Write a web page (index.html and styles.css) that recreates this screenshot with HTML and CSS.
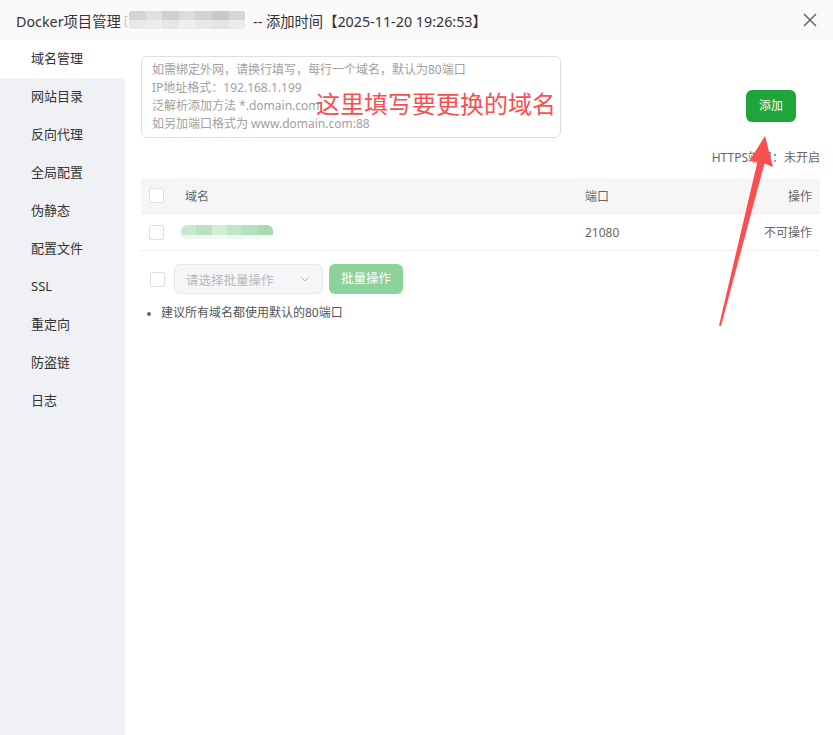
FILE: index.html
```html
<!DOCTYPE html>
<html lang="zh">
<head>
<meta charset="utf-8">
<link rel="stylesheet" href="styles.css">
</head>
<body>
<div class="dialog">
  <div class="header">
    <div class="title">
      <span>Docker项目管理</span>
      <span class="bracket">[</span>
      <span class="blur-title"><i></i><i></i><i></i><i></i><i></i><i></i><i></i></span>
      <span class="time">-- 添加时间【2025-11-20 19:26:53】</span>
    </div>
    <svg class="close" width="14" height="14" viewBox="0 0 14 14"><path d="M1 1L13 13M13 1L1 13" stroke="#666" stroke-width="1.5" fill="none"/></svg>
  </div>
  <div class="body">
    <div class="sidebar">
      <div class="nav-item active">域名管理</div>
      <div class="nav-item">网站目录</div>
      <div class="nav-item">反向代理</div>
      <div class="nav-item">全局配置</div>
      <div class="nav-item">伪静态</div>
      <div class="nav-item">配置文件</div>
      <div class="nav-item">SSL</div>
      <div class="nav-item">重定向</div>
      <div class="nav-item">防盗链</div>
      <div class="nav-item">日志</div>
    </div>
    <div class="main">
      <div class="top-row">
        <div class="textarea">
          <div>如需绑定外网，请换行填写，每行一个域名，默认为80端口</div>
          <div>IP地址格式：192.168.1.199</div>
          <div>泛解析添加方法 *.domain.com</div>
          <div>如另加端口格式为 www.domain.com:88</div>
        </div>
        <div class="btn-add">添加</div>
      </div>
      <div class="https">HTTPS端口：未开启</div>
      <div class="table">
        <div class="tr thead">
          <div class="c-check"><span class="checkbox"></span></div>
          <div class="c-domain">域名</div>
          <div class="c-port">端口</div>
          <div class="c-op">操作</div>
        </div>
        <div class="tr">
          <div class="c-check"><span class="checkbox"></span></div>
          <div class="c-domain"><span class="blur-domain"><i></i><i></i><i></i><i></i><i></i><i></i></span></div>
          <div class="c-port">21080</div>
          <div class="c-op">不可操作</div>
        </div>
      </div>
      <div class="batch">
        <span class="checkbox"></span>
        <div class="select"><span>请选择批量操作</span>
          <svg width="10" height="6" viewBox="0 0 10 6"><path d="M1 1L5 5L9 1" stroke="#bbb" stroke-width="1" fill="none"/></svg>
        </div>
        <div class="btn-batch">批量操作</div>
      </div>
      <ul class="tips">
        <li>建议所有域名都使用默认的80端口</li>
      </ul>
    </div>
  </div>
  <div class="annot">这里填写要更换的域名</div>
  <svg class="arrow" width="833" height="735" viewBox="0 0 833 735">
    <polygon points="765,136 773,167 764.5,163.5 721,326 719,325.5 757.5,161.5 749.5,161" fill="#fb4f4f"/>
  </svg>
</div>
</body>
</html>
```
FILE: styles.css
```css
* { box-sizing: border-box; }
html, body { margin: 0; padding: 0; }
body {
  font-family: "Noto Sans", "Noto Sans CJK SC", sans-serif;
  color: #333;
  background: #fff;
}
.dialog {
  position: relative;
  width: 833px;
  height: 735px;
  display: flex;
  flex-direction: column;
  overflow: hidden;
}
.header {
  height: 40px;
  flex: none;
  background: #fafafa;
  display: flex;
  align-items: center;
  justify-content: space-between;
  padding: 0 16px 0 16px;
}
.title {
  display: flex;
  align-items: center;
  font-size: 14.3px;
  color: #333;
  white-space: nowrap;
}
.bracket { color: #c8c8c8; margin-left: 3px; margin-right: 1px; font-size: 13px; }
.blur-title {
  display: flex;
  height: 18px;
  width: 116px;
  margin-right: 8px;
  border-radius: 3px;
  overflow: hidden;
}
.blur-title i {
  flex: 1;
  background: linear-gradient(#d4d4d8 0 50%, #e8e8ea 50% 100%);
}
.blur-title i:nth-child(2) { background: linear-gradient(#e0e0e3 0 50%, #ececee 50% 100%); }
.blur-title i:nth-child(3) { background: linear-gradient(#d0d0d4 0 50%, #e6e6e8 50% 100%); }
.blur-title i:nth-child(4) { background: linear-gradient(#dcdce0 0 50%, #eeeef0 50% 100%); }
.blur-title i:nth-child(5) { background: linear-gradient(#d2d2d6 0 50%, #e8e8ea 50% 100%); }
.blur-title i:nth-child(6) { background: linear-gradient(#c8c8cc 0 50%, #e4e4e6 50% 100%); }
.blur-title i:nth-child(7) { background: linear-gradient(#d6d6da 0 50%, #ebebed 50% 100%); }
.body {
  flex: 1;
  display: flex;
}
.sidebar {
  width: 125px;
  flex: none;
  background: #f0f1f5;
}
.nav-item {
  height: 38px;
  line-height: 36px;
  padding-left: 31px;
  font-size: 13px;
  color: #333;
}
.nav-item.active { background: #fff; }
.main {
  flex: 1;
  padding: 16px 13px 0 16px;
}
.top-row {
  display: flex;
  justify-content: space-between;
  align-items: flex-start;
}
.textarea {
  width: 420px;
  height: 82px;
  border: 1px solid #dcdfe6;
  border-radius: 6px;
  padding: 4px 10px;
  font-size: 12px;
  line-height: 18px;
  color: #a0a0a0;
  white-space: nowrap;
}
.btn-add {
  margin-top: 34px;
  margin-right: 24px;
  width: 50px;
  height: 32px;
  line-height: 32px;
  text-align: center;
  background: #20a53a;
  color: #fff;
  border-radius: 6px;
  font-size: 12px;
}
.https {
  margin-top: 12px;
  height: 16px;
  line-height: 16px;
  text-align: right;
  font-size: 12px;
  color: #666;
}
.table {
  margin-top: 12px;
  font-size: 12px;
  color: #666;
}
.tr {
  display: flex;
  align-items: center;
  height: 37px;
  border-bottom: 1px solid #ebeef5;
  padding: 0 8px;
}
.thead { height: 36px; background: #f6f6f6; }
.c-check { width: 36px; display: flex; }
.c-domain { width: 400px; display: flex; align-items: center; }
.c-port { flex: 1; }
.c-op { text-align: right; }
.checkbox {
  display: inline-block;
  width: 15px;
  height: 15px;
  border: 1px solid #dcdfe6;
  border-radius: 2px;
  background: #fff;
}
.blur-domain {
  display: flex;
  width: 92px;
  height: 14px;
  margin-left: -4px;
  border-radius: 6px;
  overflow: hidden;
}
.blur-domain i { flex: 1; background: linear-gradient(#c8e8cf 0 70%, #eaf6ec 70% 100%); }
.blur-domain i:nth-child(2) { background: linear-gradient(#b8e2c2 0 70%, #eef8f0 70% 100%); }
.blur-domain i:nth-child(3) { background: linear-gradient(#d2eed8 0 70%, #f2faf3 70% 100%); }
.blur-domain i:nth-child(4) { background: linear-gradient(#bfe6c8 0 70%, #eef8f0 70% 100%); }
.blur-domain i:nth-child(5) { background: linear-gradient(#b4e0be 0 70%, #f0f9f2 70% 100%); }
.blur-domain i:nth-child(6) { background: linear-gradient(#a8dab4 0 70%, #f4fbf5 70% 100%); }
.batch {
  margin-top: 13px;
  display: flex;
  align-items: center;
  padding-left: 9px;
}
.select {
  margin-left: 9px;
  width: 149px;
  height: 30px;
  border: 1px solid #e4e7ed;
  border-radius: 6px;
  background: #f5f6f8;
  display: flex;
  align-items: center;
  justify-content: space-between;
  padding: 0 12px 0 11px;
  font-size: 12.5px;
  color: #b8b8b8;
}
.btn-batch {
  margin-left: 6px;
  width: 74px;
  height: 30px;
  line-height: 30px;
  text-align: center;
  border-radius: 6px;
  background: #8dd29b;
  color: #fff;
  font-size: 12.5px;
}
.tips {
  margin: 10px 0 0 0;
  padding-left: 20px;
  font-size: 12px;
  line-height: 18px;
  color: #555;
}
.tips li::marker { font-size: 10px; color: #666; }
.annot {
  position: absolute;
  left: 316px;
  top: 88px;
  font-size: 24px;
  line-height: 30px;
  color: #fb4f4f;
  white-space: nowrap;
  font-family: "Noto Sans CJK SC", sans-serif;
}
.arrow {
  position: absolute;
  left: 0;
  top: 0;
  pointer-events: none;
}
```
